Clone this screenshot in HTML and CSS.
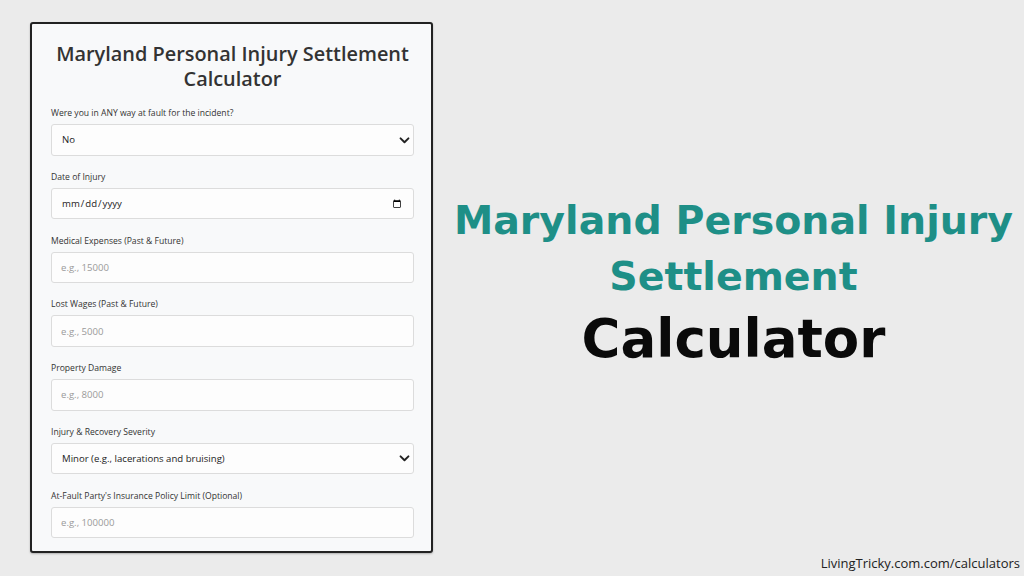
FILE: index.html
```html
<!DOCTYPE html>
<html>
<head>
<meta charset="utf-8">
<link rel="stylesheet" href="styles.css">
</head>
<body>
<div class="page">
  <div class="card">
    <h2 class="card-title">Maryland Personal Injury Settlement Calculator</h2>
    <div class="field">
      <label class="label">Were you in ANY way at fault for the incident?</label>
      <div class="select-wrap">
        <select class="control select"><option>No</option></select>
        <svg class="chev" viewBox="0 0 12 8" width="11" height="7"><path d="M1.5 1.5 L6 6 L10.5 1.5" fill="none" stroke="#222" stroke-width="2.2" stroke-linecap="round" stroke-linejoin="round"/></svg>
      </div>
    </div>
    <div class="field">
      <label class="label">Date of Injury</label>
      <input class="control date" type="date">
    </div>
    <div class="field">
      <label class="label">Medical Expenses (Past &amp; Future)</label>
      <input class="control" type="text" placeholder="e.g., 15000">
    </div>
    <div class="field">
      <label class="label">Lost Wages (Past &amp; Future)</label>
      <input class="control" type="text" placeholder="e.g., 5000">
    </div>
    <div class="field">
      <label class="label">Property Damage</label>
      <input class="control" type="text" placeholder="e.g., 8000">
    </div>
    <div class="field">
      <label class="label">Injury &amp; Recovery Severity</label>
      <div class="select-wrap">
        <select class="control select"><option>Minor (e.g., lacerations and bruising)</option></select>
        <svg class="chev" viewBox="0 0 12 8" width="11" height="7"><path d="M1.5 1.5 L6 6 L10.5 1.5" fill="none" stroke="#222" stroke-width="2.2" stroke-linecap="round" stroke-linejoin="round"/></svg>
      </div>
    </div>
    <div class="field">
      <label class="label">At-Fault Party's Insurance Policy Limit (Optional)</label>
      <input class="control" type="text" placeholder="e.g., 100000">
    </div>
  </div>
  <div class="side">
    <div class="headline">
      <div class="hl-teal">Maryland Personal Injury<br>Settlement</div>
      <div class="hl-black">Calculator</div>
    </div>
    <div class="footer">LivingTricky.com.com/calculators</div>
  </div>
</div>
</body>
</html>
```
FILE: styles.css
```css
* { box-sizing: border-box; }
html, body { margin: 0; padding: 0; }
body {
  background: #ebebeb;
  font-family: "Open Sans", "Liberation Sans", sans-serif;
  width: 1024px;
  height: 576px;
  overflow: hidden;
}
.page {
  display: flex;
  height: 576px;
  padding-left: 30px;
}
.card {
  margin-top: 22px;
  width: 403px;
  height: 531px;
  background: #f8f9fa;
  border: 2px solid #222;
  border-radius: 3px;
  padding: 17px 17px 0 19px;
  box-shadow: 0 1px 2px rgba(0,0,0,0.25);
}
.card-title {
  margin: 0 -14px 16px -14px;
  text-align: center;
  font-size: 19.9px;
  line-height: 25px;
  font-weight: 600;
  color: #333;
}
.field { margin-bottom: 15.3px; }
.label {
  display: block;
  font-size: 8.6px;
  line-height: 12px;
  color: #333;
  margin-bottom: 5px;
}
.control {
  display: block;
  width: 363px;
  height: 31.5px;
  border: 1px solid #dcdcdc;
  border-radius: 3px;
  background: #fdfdfd;
  font-family: "Open Sans", "Liberation Sans", sans-serif;
  font-size: 9.6px;
  color: #222;
  padding: 0 9px;
  outline: none;
}
.control::placeholder { color: #9a9a9a; }
.select {
  appearance: none;
  -webkit-appearance: none;
  padding-left: 10px;
}
.select-wrap { position: relative; width: 363px; }
.chev {
  position: absolute;
  right: 4px;
  top: 12.5px;
  pointer-events: none;
}
.date { padding-left: 9px; color: #222; }
.side {
  flex: 1;
  display: flex;
  flex-direction: column;
}
.headline {
  flex: 1;
  display: flex;
  flex-direction: column;
  justify-content: center;
  align-items: center;
  text-align: center;
  padding-left: 10px;
  padding-top: 12px;
}
.hl-teal {
  font-family: "DejaVu Sans", sans-serif;
  font-weight: 700;
  color: #1e8f87;
  font-size: 39.5px;
  line-height: 56px;
}
.hl-black {
  font-family: "DejaVu Sans", sans-serif;
  font-weight: 700;
  color: #0a0a0a;
  font-size: 53px;
  line-height: 70px;
}
.footer {
  align-self: flex-end;
  margin: 0 4px 4px 0;
  font-size: 13px;
  line-height: 18px;
  color: #222;
}
```
